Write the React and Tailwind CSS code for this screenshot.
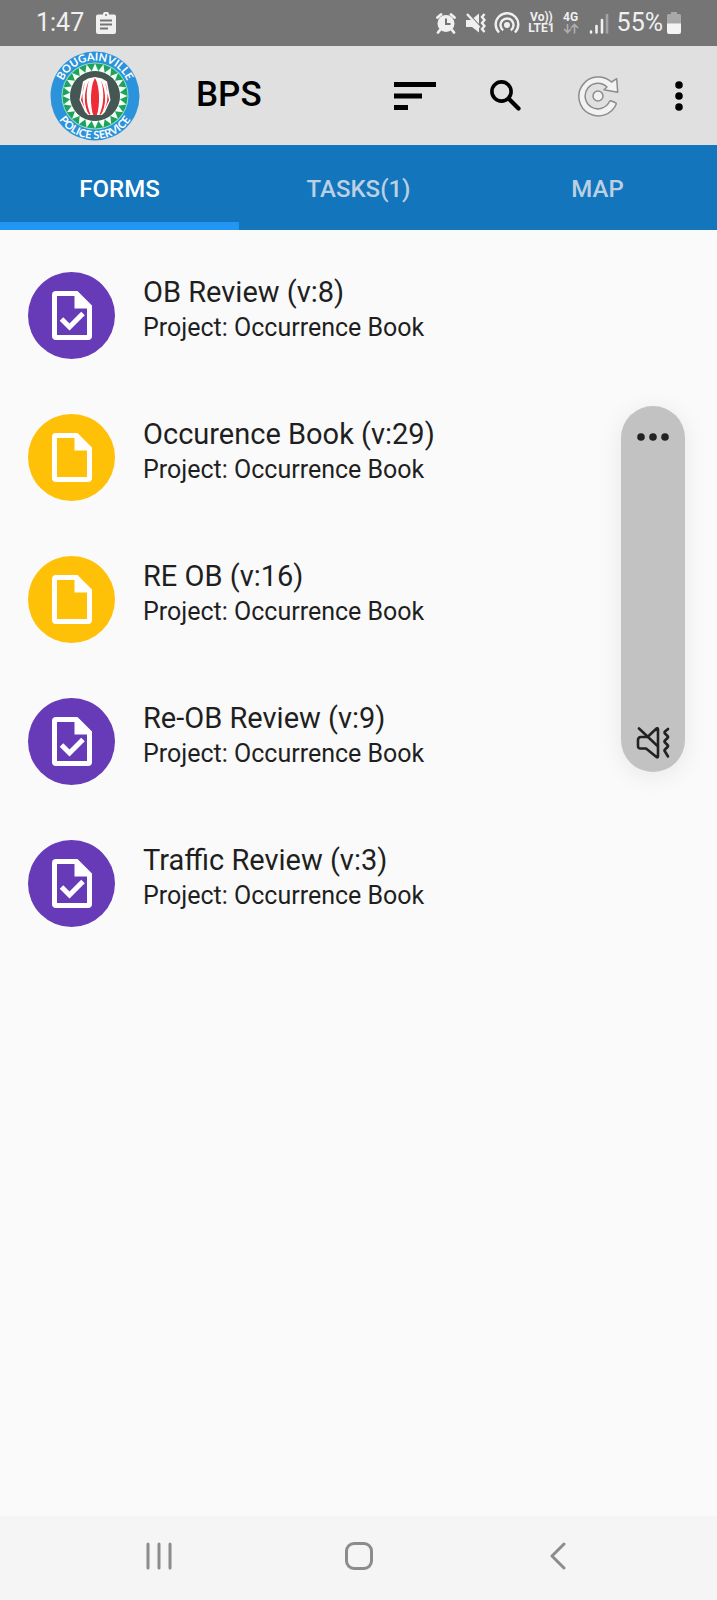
const FORMS = [
  { title: "OB Review (v:8)", review: true },
  { title: "Occurence Book (v:29)", review: false },
  { title: "RE OB (v:16)", review: false },
  { title: "Re-OB Review (v:9)", review: true },
  { title: "Traffic Review (v:3)", review: true },
];

function StatusBar() {
  return (
    <div className="flex h-[46px] items-center bg-[#757575] pr-9 pl-9 text-[25px] text-[#f0f0f0]">
      <span>1:47</span>
      <svg className="ml-3 h-[22px] w-5" viewBox="0 0 20 22" fill="#f0f0f0">
        <path
          fillRule="evenodd"
          d="M2 2.500h5a3 3 0 0 1 6 0h5a2 2 0 0 1 2 2V20a2 2 0 0 1-2 2H2a2 2 0 0 1-2-2V4.500a2 2 0 0 1 2-2ZM10 2a1 1 0 1 0 0 2 1 1 0 0 0 0-2ZM4 7.500v2h12v-2ZM4 11.500v2h12v-2ZM4 15.500v2h8v-2Z"
        />
      </svg>
      <div className="ml-auto flex items-center">
        <svg className="h-[22px] w-5" viewBox="0 0 20 22">
          <circle cx="10" cy="11.500" r="8.500" fill="#f0f0f0" />
          <path d="M1.500 5.500 5 2.500M18.500 5.500 15 2.500M4 18l-2 2.500M16 18l2 2.500" stroke="#f0f0f0" strokeWidth="2.800" strokeLinecap="round" />
          <path d="M10 6.500V12h4.500" fill="none" stroke="#757575" strokeWidth="2" />
        </svg>
        <svg className="ml-[10px] h-[22px] w-5" viewBox="0 0 20 22" fill="none">
          <path d="M0 8h5l8-6.500v19L6 15H0Z" fill="#f0f0f0" />
          <path d="M1 .500 15 15.500" stroke="#757575" strokeWidth="2" />
          <path d="M1 2 13.500 15.500" stroke="#f0f0f0" strokeWidth="2.400" />
          <path d="m18.500 2-2.500 3 2.500 3-2.500 3 2.500 3-2.500 3 2.500 3" stroke="#f0f0f0" strokeWidth="2.400" />
        </svg>
        <svg className="ml-2 h-[22px] w-[26px]" viewBox="0 0 26 22" fill="none" stroke="#f0f0f0" strokeWidth="2.400">
          <circle cx="13" cy="13" r="3" fill="#f0f0f0" stroke="none" />
          <path d="M9.200 18.200a6.500 6.500 0 1 1 7.600 0" />
          <path d="M5 20.500a11.300 11.300 0 1 1 16 0" />
        </svg>
        <div className="ml-2 text-center text-[12px] leading-[11px] font-bold">
          <div>Vo))</div>
          <div>LTE1</div>
        </div>
        <div className="ml-2 flex flex-col items-center text-[12px] leading-[11px] font-bold">
          <span>4G</span>
          <svg className="h-[11px] w-4" viewBox="0 0 16 11" fill="none" stroke="#adadad" strokeWidth="1.600">
            <path d="M4.500 1v8.500M1 6l3.500 3.500L8 6M11.500 10.500V1.500M8 5l3.500-3.500L15 5" />
          </svg>
        </div>
        <svg className="ml-[10px] h-[22px] w-5" viewBox="0 0 20 22" strokeWidth="2.600" strokeLinecap="round">
          <path d="M2 19.500v1M7.500 14v6.500M13 8v12.500" stroke="#f0f0f0" />
          <path d="M18 3v17.500" stroke="#a3a3a3" />
        </svg>
        <span className="ml-2">55%</span>
        <svg className="ml-1 h-[22px] w-[14px]" viewBox="0 0 14 22">
          <path d="M4 0h6v2h2.500A1.500 1.500 0 0 1 14 3.500V12H0V3.500A1.500 1.500 0 0 1 1.500 2H4Z" fill="#a8a8a8" />
          <path d="M0 11.500h14V20a2 2 0 0 1-2 2H2a2 2 0 0 1-2-2Z" fill="#f5f5f5" />
        </svg>
      </div>
    </div>
  );
}

const TEETH = Array.from({ length: 24 }, (_, i) => i * 15);

function Logo() {
  return (
    <svg className="h-[90px] w-[90px] overflow-visible" viewBox="0 0 90 90" role="img" aria-label="Bougainville Police Service">
      <defs>
        <path id="arc-top" d="M9.500 45a35.500 35.500 0 0 1 71 0" />
        <path id="arc-bottom" d="M2 45a43 43 0 0 0 86 0" />
      </defs>
      <circle cx="45" cy="45" r="44.500" fill="#2b93dc" />
      <circle cx="45" cy="45" r="33.500" fill="#8fe0c4" />
      <circle cx="45" cy="45" r="32.500" fill="#1fa35c" />
      {TEETH.map((a) => (
        <path key={a} d="M41.500 20.500h7L45 12.500Z" fill="#f4fff8" transform={`rotate(${a} 45 45)`} />
      ))}
      <circle cx="45" cy="45" r="25" fill="#465653" />
      <path d="M38 27.500 45 26l7 1.500 5 3L60.500 49 55 61l-3 3H38l-3-3-5.500-12L33 30.500Z" fill="#fff" />
      <path d="M45 27c5 8 5 28 1.800 37h-3.600C40 55 40 35 45 27Z" fill="#ee2b37" />
      <path d="M39 29.500c-3.500 11-3 24 1.500 34H39C34 56 33 42 39 29.500ZM51 29.500c3.500 11 3 24-1.500 34H51C56 56 57 42 51 29.500Z" fill="#ee2b37" />
      <path d="M35 31c-4 11-3 21 1.500 30L31 49ZM55 31c4 11 3 21-1.500 30L59 49Z" fill="#ee2b37" />
      <g fill="#fff" fontFamily="Lato, sans-serif" fontWeight="700" fontSize="11" textAnchor="middle">
        <text><textPath href="#arc-top" startOffset="50%">BOUGAINVILLE</textPath></text>
        <text><textPath href="#arc-bottom" startOffset="50%">POLICE SERVICE</textPath></text>
      </g>
    </svg>
  );
}

function Header() {
  return (
    <header className="flex h-[99px] items-center bg-[#e0e0e0] pr-[34px] pl-[50px]">
      <Logo />
      <h1 className="ml-14 text-[35px] font-medium text-black">BPS</h1>
      <div className="ml-auto flex items-center">
        <button aria-label="Sort">
          <svg className="h-7 w-[42px]" viewBox="0 0 42 28">
            <path d="M0 0h42v5H0ZM0 11.500h28v5H0ZM0 23h14v5H0Z" />
          </svg>
        </button>
        <button aria-label="Search" className="ml-[54px]">
          <svg className="h-[31px] w-[31px]" viewBox="0 0 31 31" fill="none" stroke="#000">
            <circle cx="11.500" cy="11.500" r="9.600" strokeWidth="3.600" />
            <path d="m19.500 19.500 9 9" strokeWidth="4.200" strokeLinecap="round" />
          </svg>
        </button>
        <button aria-label="Refresh" className="ml-14">
          <svg className="h-[42px] w-[42px]" viewBox="0 0 42 42" fill="#f2f2f2" stroke="#8c8c8c" strokeWidth="1.500" strokeLinejoin="round">
            <path d="M34.500 7A19.500 19.500 0 1 0 39.300 29Q39.300 28 38.500 27.700L34 25.700Q33 25.500 32.500 26.500A12.800 12.800 0 1 1 30 12L27 14.700 40.700 17.300 39.700 3.700Z" />
            <circle cx="21" cy="21" r="5" />
          </svg>
        </button>
        <button aria-label="More options" className="ml-14">
          <svg className="h-[30px] w-2" viewBox="0 0 8 30">
            <circle cx="4" cy="4" r="3.800" />
            <circle cx="4" cy="15" r="3.800" />
            <circle cx="4" cy="26" r="3.800" />
          </svg>
        </button>
      </div>
    </header>
  );
}

function Tabs() {
  return (
    <nav className="grid h-[85px] grid-cols-3 bg-[#1375bc] text-[24px] font-medium">
      <button className="border-t-10 border-b-8 border-t-transparent border-b-[#2196f3] text-white">FORMS</button>
      <button className="border-t-10 border-b-8 border-transparent text-[#bcd0e3]">TASKS(1)</button>
      <button className="border-t-10 border-b-8 border-transparent text-[#bcd0e3]">MAP</button>
    </nav>
  );
}

function FormIcon({ review }) {
  return (
    <div className={"flex size-[87px] items-center justify-center rounded-full " + (review ? "bg-[#673ab7]" : "bg-[#ffc107]")}>
      <svg className="h-[49px] w-10" viewBox="0 0 40 49">
        <path
          fill="#fff"
          fillRule="evenodd"
          d="M4 0h21.500L40 14.500V45a4 4 0 0 1-4 4H4a4 4 0 0 1-4-4V4a4 4 0 0 1 4-4ZM5 5v39h30V17.500H22.500V5Z"
        />
        {review && <path d="m9.500 28 8 8L31 22.500" fill="none" stroke="#fff" strokeWidth="5" />}
      </svg>
    </div>
  );
}

function FormList() {
  return (
    <ul className="pt-[14px]">
      {FORMS.map((form) => (
        <li key={form.title}>
          <a href="#" className="flex h-[142px] gap-7 px-7 pt-7 text-[#1f1f1f]">
            <FormIcon review={form.review} />
            <div className="pt-[2px]">
              <div className="text-[29px] leading-9">{form.title}</div>
              <div className="text-[25px] leading-9">Project: Occurrence Book</div>
            </div>
          </a>
        </li>
      ))}
    </ul>
  );
}

function VolumePanel() {
  return (
    <div className="absolute top-[176px] right-8 flex h-[366px] w-16 flex-col items-center justify-between rounded-full bg-[#c2c2c2] pt-[27px] pb-[13px] shadow-[0_4px_24px_rgba(0,0,0,0.08)]">
      <button aria-label="Volume settings">
        <svg className="h-2 w-8" viewBox="0 0 32 8" fill="#222">
          <circle cx="4" cy="4" r="3.800" />
          <circle cx="16" cy="4" r="3.800" />
          <circle cx="28" cy="4" r="3.800" />
        </svg>
      </button>
      <button aria-label="Mute">
        <svg className="h-8 w-[34px]" viewBox="0 0 34 32" fill="none" stroke="#222" strokeWidth="2.600" strokeLinejoin="round" strokeLinecap="round">
          <path d="M11.500 10 20.500 1.500q1.500-1 1.500 1V29q0 2-1.500 1L10 21.500H4.500Q2 21.500 2 19v-6q0-2.500 2.500-3Z" />
          <path d="M3 1.500 21 18.500M32 2l-3 2.500q-1 1 0 2l2.500 2.500q1 1 0 2L29 13.500q-1 1 0 2l2.500 2.500q1 1 0 2L29 22.500q-1 1 0 2l3 5" />
        </svg>
      </button>
    </div>
  );
}

function NavigationBar() {
  return (
    <nav className="flex h-[84px] items-center bg-[#f5f5f5] px-[59px] pb-1">
      <button aria-label="Recent apps" className="flex flex-1 justify-center">
        <svg className="h-7 w-7" viewBox="0 0 28 28" stroke="#8c8c8c" strokeWidth="3" strokeLinecap="round">
          <path d="M3 2v24M14 2v24M25 2v24" />
        </svg>
      </button>
      <button aria-label="Home" className="flex flex-1 justify-center">
        <svg className="h-7 w-7" viewBox="0 0 28 28" fill="none" stroke="#8c8c8c" strokeWidth="3">
          <rect x="1.500" y="1.500" width="25" height="25" rx="7.500" />
        </svg>
      </button>
      <button aria-label="Back" className="flex flex-1 justify-center">
        <svg className="h-7 w-4" viewBox="0 0 16 28" fill="none" stroke="#8c8c8c" strokeWidth="3" strokeLinecap="round" strokeLinejoin="round">
          <path d="M14 2 2 14l12 12" />
        </svg>
      </button>
    </nav>
  );
}

export default function App() {
  return (
    <div className="flex min-h-screen flex-col bg-[#fafafa] font-['Roboto',sans-serif]">
      <StatusBar />
      <Header />
      <Tabs />
      <main className="relative flex-1">
        <FormList />
        <VolumePanel />
      </main>
      <NavigationBar />
    </div>
  );
}
